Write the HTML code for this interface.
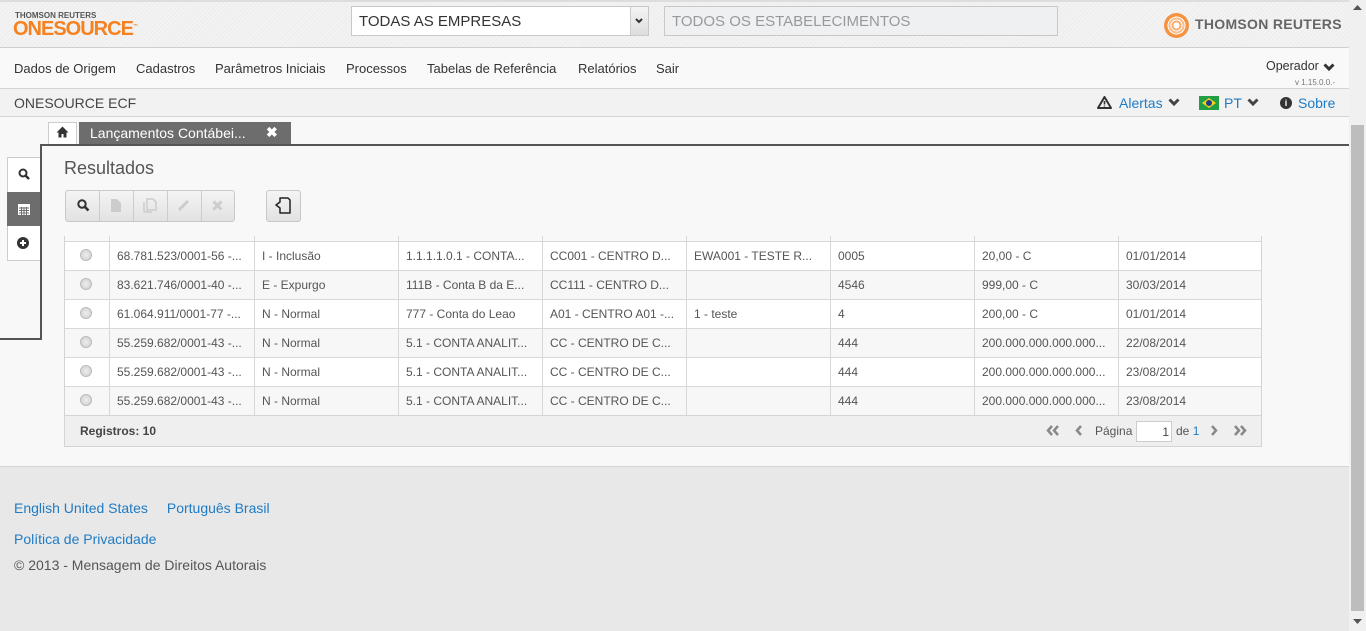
<!DOCTYPE html>
<html><head><meta charset="utf-8"><style>
*{margin:0;padding:0;box-sizing:border-box}
body{width:1366px;height:631px;overflow:hidden;position:relative;font-family:"Liberation Sans",Arial,sans-serif;background:#e8e8e8;color:#444}
.a{position:absolute}
.hdr{left:0;top:0;width:1349px;height:48px;background:repeating-linear-gradient(135deg,#f3f3f3 0 2px,#ececec 2px 3px);border-top:2px solid #ddd;border-bottom:1px solid #cfcfcf}
.nav{left:0;top:48px;width:1349px;height:41px;background:#f9f9f9;border-bottom:1px solid #d4d4d4}
.nav span{position:absolute;top:13px;font-size:13px;color:#333}
.sub{left:0;top:89px;width:1349px;height:28px;background:#f2f2f2;border-bottom:1px solid #d4d4d4}
.content{left:0;top:117px;width:1349px;height:350px;background:#f8f8f8;border-bottom:1px solid #d6d6d6}
.td{position:absolute;font-size:12px;color:#555;white-space:nowrap;overflow:hidden}
.btn{position:absolute;top:190px;height:32px;border:1px solid #c8c8c8;background:linear-gradient(#f4f4f4,#e2e2e2)}
a{color:#1f7bc4;text-decoration:none}
svg{position:absolute}
</style></head><body>
<div class="a hdr"></div>
<div class="a" style="left:15px;top:11px;font-size:8px;font-weight:bold;color:#555">THOMSON REUTERS</div>
<div class="a" style="left:13px;top:18px;font-size:20px;font-weight:bold;color:#f58220;letter-spacing:-1px">ONESOURCE<sup style="font-size:5px">™</sup></div>
<div class="a" style="left:351px;top:6px;width:298px;height:30px;background:#fff;border:1px solid #c8c8c8"></div>
<div class="a" style="left:359px;top:13px;font-size:15px;color:#333">TODAS AS EMPRESAS</div>
<div class="a" style="left:630px;top:7px;width:18px;height:28px;background:linear-gradient(#f4f4f4,#ddd);border-left:1px solid #ccc"></div>
<svg style="left:635px;top:18px" width="8" height="6"><path d="M1 1L4 4L7 1" stroke="#333" stroke-width="2" fill="none"/></svg>
<div class="a" style="left:664px;top:6px;width:394px;height:30px;background:#eef0f2;border:1px solid #c8c8c8"></div>
<div class="a" style="left:672px;top:13px;font-size:15px;color:#999">TODOS OS ESTABELECIMENTOS</div>
<div class="a" style="left:1164px;top:13px;width:25px;height:25px;border-radius:50%;background:radial-gradient(circle,#fff 0 3px,#f7a35c 3px 5px,#fff 5px 6px,#fab57a 6px 8px,#fff 8px 9px,#f58220 9px 12.5px);opacity:.85"></div>
<div class="a" style="left:1195px;top:16px;font-size:14px;font-weight:bold;color:#666;letter-spacing:0.3px">THOMSON REUTERS</div>

<div class="a nav">
<span style="left:14px">Dados de Origem</span><span style="left:136px">Cadastros</span><span style="left:215px">Parâmetros Iniciais</span><span style="left:346px">Processos</span><span style="left:427px">Tabelas de Referência</span><span style="left:578px">Relatórios</span><span style="left:656px">Sair</span>
<span style="left:1266px;top:11px;font-size:12.5px">Operador</span>
<svg style="left:1323px;top:15px" width="12" height="8"><path d="M1.5 1.5L6 6L10.5 1.5" stroke="#333" stroke-width="3" fill="none"/></svg>
<span style="left:1295px;top:30px;font-size:8px;color:#777">v 1.15.0.0.-</span>
</div>
<div class="a sub">
<span class="a" style="left:14px;top:6px;font-size:14px;color:#444">ONESOURCE ECF</span>
<svg style="left:1097px;top:7px" width="15" height="13"><path d="M7.5 1L14 12H1Z" stroke="#333" stroke-width="2" fill="none" stroke-linejoin="round"/><path d="M7.5 5V8.5M7.5 9.5V10.5" stroke="#333" stroke-width="1.6"/></svg>
<a class="a" style="left:1119px;top:6px;font-size:14px">Alertas</a>
<svg style="left:1168px;top:9px" width="12" height="8"><path d="M1.5 1.5L6 6L10.5 1.5" stroke="#444" stroke-width="3" fill="none"/></svg>
<span class="a" style="left:1199px;top:7px;width:20px;height:14px;background:#229e45"><span class="a" style="left:3px;top:2px;width:14px;height:10px;background:#f8d21c;clip-path:polygon(50% 0,100% 50%,50% 100%,0 50%)"></span><span class="a" style="left:7px;top:4px;width:6px;height:6px;border-radius:50%;background:#1d3e8a"></span></span>
<a class="a" style="left:1224px;top:6px;font-size:14px">PT</a>
<svg style="left:1247px;top:9px" width="12" height="8"><path d="M1.5 1.5L6 6L10.5 1.5" stroke="#444" stroke-width="3" fill="none"/></svg>
<span class="a" style="left:1280px;top:8px;width:12px;height:12px;border-radius:50%;background:#333;color:#fff;font-size:9px;font-weight:bold;text-align:center;line-height:12px">i</span>
<a class="a" style="left:1298px;top:6px;font-size:14px">Sobre</a>
</div>

<div class="a content"></div>
<div class="a" style="left:48px;top:122px;width:29px;height:23px;background:#fff;border:1px solid #ccc"></div>
<svg style="left:56px;top:126px" width="13" height="12"><path d="M6.5 0.5L12.5 6.5H10.5V11.5H7.5V8H5.5V11.5H2.5V6.5H0.5Z" fill="#333"/></svg>
<div class="a" style="left:79px;top:122px;width:212px;height:23px;background:#6d6d6d;color:#fff;font-size:14px;padding:3px 0 0 11px">Lançamentos Contábei...<span style="position:absolute;left:187px;top:2px;font-weight:bold">✖</span></div>
<div class="a" style="left:7px;top:157px;width:34px;height:104px;border:1px solid #ccc;background:#fff"></div>
<div class="a" style="left:7px;top:192px;width:33px;height:34px;background:#6d6d6d"></div>
<svg style="left:18px;top:168px" width="12" height="12"><circle cx="5" cy="5" r="3.5" stroke="#333" stroke-width="2" fill="none"/><path d="M7.5 7.5L11 11" stroke="#333" stroke-width="2.5"/></svg>
<svg style="left:18px;top:203px" width="12" height="12"><rect x="0" y="1" width="12" height="11" fill="#fff"/><path d="M1 5H11M1 7.5H11M1 10H11M3.5 4V12M6 4V12M8.5 4V12" stroke="#6d6d6d" stroke-width="1"/></svg>
<div class="a" style="left:17px;top:237px;width:12px;height:12px;border-radius:50%;background:#333"></div>
<svg style="left:17px;top:237px" width="12" height="12"><path d="M6 3V9M3 6H9" stroke="#fff" stroke-width="2"/></svg>
<div class="a" style="left:40px;top:144px;width:1309px;height:2px;background:#555"></div>
<div class="a" style="left:40px;top:144px;width:2px;height:196px;background:#555"></div>
<div class="a" style="left:0;top:338px;width:42px;height:2px;background:#555"></div>
<div class="a" style="left:64px;top:158px;font-size:18px;color:#555">Resultados</div>
<div class="a btn" style="left:65px;width:170px;border-radius:3px"></div>
<div class="a" style="left:99px;top:191px;width:1px;height:30px;background:#ccc"></div>
<div class="a" style="left:133px;top:191px;width:1px;height:30px;background:#ccc"></div>
<div class="a" style="left:167px;top:191px;width:1px;height:30px;background:#ccc"></div>
<div class="a" style="left:201px;top:191px;width:1px;height:30px;background:#ccc"></div>
<svg style="left:77px;top:199px" width="13" height="13"><circle cx="5" cy="5" r="3.7" stroke="#333" stroke-width="2" fill="none"/><path d="M7.7 7.7L11.5 11.5" stroke="#333" stroke-width="2.6"/></svg>
<svg style="left:111px;top:199px" width="10" height="13"><path d="M0 0H6L10 4V13H0Z" fill="#ccc"/></svg>
<svg style="left:143px;top:198px" width="14" height="15"><path d="M4 1H10L13 4V12H4Z M1 4V14H9" stroke="#ccc" stroke-width="1.5" fill="none"/></svg>
<svg style="left:177px;top:199px" width="13" height="13"><path d="M2 11L11 2" stroke="#ccc" stroke-width="3"/></svg>
<svg style="left:212px;top:200px" width="11" height="11"><path d="M1.5 1.5L9.5 9.5M9.5 1.5L1.5 9.5" stroke="#ccc" stroke-width="3"/></svg>
<div class="a btn" style="left:266px;width:35px;border-radius:3px"></div>
<svg style="left:274px;top:197px" width="18" height="18"><path d="M6 1H14L16 3V16H6V11L2 8L6 5Z" stroke="#222" stroke-width="1.5" fill="none" stroke-linejoin="round"/></svg>

<div class="a" style="left:64px;top:236px;width:1198px;height:211px;border:1px solid #d4d4d4;border-top:none;background:#fff"></div>
<div id="rows"></div>
<div class="a" style="left:65px;top:415px;width:1196px;height:31px;background:#efefef;border-top:1px solid #d4d4d4"></div>
<div class="a" style="left:80px;top:424px;font-size:12px;font-weight:bold;color:#444">Registros: 10</div>
<svg style="left:1046px;top:425px" width="14" height="11"><path d="M6 1L2 5.5L6 10M12 1L8 5.5L12 10" stroke="#888" stroke-width="2.5" fill="none"/></svg>
<svg style="left:1075px;top:425px" width="8" height="11"><path d="M6 1L2 5.5L6 10" stroke="#888" stroke-width="2.5" fill="none"/></svg>
<div class="a" style="left:1095px;top:424px;font-size:12px;color:#555">Página</div>
<div class="a" style="left:1136px;top:421px;width:36px;height:21px;background:#fff;border:1px solid #ccc;font-size:12px;text-align:right;padding:3px 2px 0 0;color:#444">1</div>
<div class="a" style="left:1176px;top:424px;font-size:12px;color:#555">de <a>1</a></div>
<svg style="left:1210px;top:425px" width="8" height="11"><path d="M2 1L6 5.5L2 10" stroke="#888" stroke-width="2.5" fill="none"/></svg>
<svg style="left:1233px;top:425px" width="14" height="11"><path d="M2 1L6 5.5L2 10M8 1L12 5.5L8 10" stroke="#888" stroke-width="2.5" fill="none"/></svg>

<div class="a" style="left:14px;top:500px;font-size:14px"><a>English United States</a><a style="margin-left:19px">Português Brasil</a></div>
<div class="a" style="left:14px;top:531px;font-size:14px"><a>Política de Privacidade</a></div>
<div class="a" style="left:14px;top:557px;font-size:14px;color:#555">© 2013 - Mensagem de Direitos Autorais</div>

<div class="a" style="left:1349px;top:0;width:17px;height:631px;background:#f0f0f0"></div>
<svg style="left:1353px;top:5px" width="9" height="6"><path d="M0 5L4.5 0L9 5Z" fill="#555"/></svg>
<div class="a" style="left:1351px;top:125px;width:13px;height:486px;background:#bdbdbd"></div>
<svg style="left:1353px;top:619px" width="9" height="6"><path d="M0 0L4.5 5L9 0Z" fill="#555"/></svg>

<script>
var cols=[64,109,254,398,542,686,830,974,1118,1261];
var data=[
["68.781.523/0001-56 -...","I - Inclusão","1.1.1.1.0.1 - CONTA...","CC001 - CENTRO D...","EWA001 - TESTE R...","0005","20,00 - C","01/01/2014"],
["83.621.746/0001-40 -...","E - Expurgo","111B - Conta B da E...","CC111 - CENTRO D...","","4546","999,00 - C","30/03/2014"],
["61.064.911/0001-77 -...","N - Normal","777 - Conta do Leao","A01 - CENTRO A01 -...","1 - teste","4","200,00 - C","01/01/2014"],
["55.259.682/0001-43 -...","N - Normal","5.1 - CONTA ANALIT...","CC - CENTRO DE C...","","444","200.000.000.000.000...","22/08/2014"],
["55.259.682/0001-43 -...","N - Normal","5.1 - CONTA ANALIT...","CC - CENTRO DE C...","","444","200.000.000.000.000...","23/08/2014"],
["55.259.682/0001-43 -...","N - Normal","5.1 - CONTA ANALIT...","CC - CENTRO DE C...","","444","200.000.000.000.000...","23/08/2014"]];
var h='';
h+='<div class="a" style="left:65px;top:236px;width:1196px;height:5px;background:#f8f8f8"></div>';
for(var r=0;r<6;r++){var y=241+r*29;
h+='<div class="a" style="left:65px;top:'+y+'px;width:1196px;height:29px;background:'+(r%2?'#f7f7f7':'#fff')+';border-top:1px solid #d8d8d8"></div>';
h+='<div class="a" style="left:80px;top:'+(y+8)+'px;width:12px;height:12px;border-radius:50%;border:1px solid #bbb;background:radial-gradient(#eee,#ccc)"></div>';
for(var c=0;c<8;c++)h+='<div class="td" style="left:'+(cols[c+1]+8)+'px;top:'+(y+8)+'px;width:135px">'+data[r][c]+'</div>';}
for(var c=1;c<9;c++)h+='<div class="a" style="left:'+cols[c]+'px;top:236px;width:1px;height:179px;background:#d8d8d8"></div>';
document.getElementById('rows').innerHTML=h;
</script>
</body></html>
